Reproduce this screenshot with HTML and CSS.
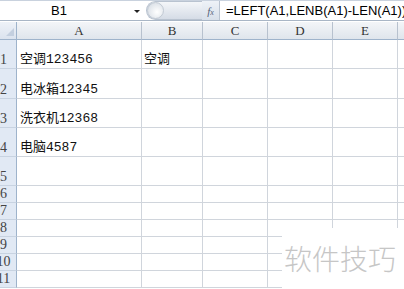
FILE: index.html
```html
<!DOCTYPE html>
<html lang="zh-CN">

<head>
    <meta charset="UTF-8">
    <meta name="viewport" content="width=device-width, initial-scale=1.0">
    <title>LEFT LENB</title>
    <link rel="stylesheet" href="styles.css">
</head>

<body>
    <!-- barra de fórmulas -->
    <div class="formula-bar">
        <div class="name-box">
            <span class="name">B1</span>
            <span class="arrow"></span>
        </div>
        <div class="grip"><span class="knob"></span></div>
        <div class="fx"><span>f</span><small>x</small></div>
        <div class="formula">=LEFT(A1,LENB(A1)-LEN(A1))</div>
    </div>

    <div class="sheet">
        <div class="row head">
            <div class="rh corner"><span class="tri"></span></div>
            <div class="ch a">A</div>
            <div class="ch b">B</div>
            <div class="ch c">C</div>
            <div class="ch d">D</div>
            <div class="ch e">E</div>
            <div class="ch f"></div>
        </div>
        <div class="row tall">
            <div class="rh">1</div>
            <div class="cell a">空调123456</div>
            <div class="cell b">空调</div>
            <div class="cell c"></div>
            <div class="cell d"></div>
            <div class="cell e"></div>
            <div class="cell f"></div>
        </div>
        <div class="row tall r2">
            <div class="rh">2</div>
            <div class="cell a">电冰箱12345</div>
            <div class="cell b"></div>
            <div class="cell c"></div>
            <div class="cell d"></div>
            <div class="cell e"></div>
            <div class="cell f"></div>
        </div>
        <div class="row tall">
            <div class="rh">3</div>
            <div class="cell a">洗衣机12368</div>
            <div class="cell b"></div>
            <div class="cell c"></div>
            <div class="cell d"></div>
            <div class="cell e"></div>
            <div class="cell f"></div>
        </div>
        <div class="row tall">
            <div class="rh">4</div>
            <div class="cell a">电脑4587</div>
            <div class="cell b"></div>
            <div class="cell c"></div>
            <div class="cell d"></div>
            <div class="cell e"></div>
            <div class="cell f"></div>
        </div>
        <div class="row tall">
            <div class="rh">5</div>
            <div class="cell a"></div>
            <div class="cell b"></div>
            <div class="cell c"></div>
            <div class="cell d"></div>
            <div class="cell e"></div>
            <div class="cell f"></div>
        </div>
        <div class="row">
            <div class="rh">6</div>
            <div class="cell a"></div>
            <div class="cell b"></div>
            <div class="cell c"></div>
            <div class="cell d"></div>
            <div class="cell e"></div>
            <div class="cell f"></div>
        </div>
        <div class="row">
            <div class="rh">7</div>
            <div class="cell a"></div>
            <div class="cell b"></div>
            <div class="cell c"></div>
            <div class="cell d"></div>
            <div class="cell e"></div>
            <div class="cell f"></div>
        </div>
        <div class="row">
            <div class="rh">8</div>
            <div class="cell a"></div>
            <div class="cell b"></div>
            <div class="cell c"></div>
            <div class="cell d"></div>
            <div class="cell e"></div>
            <div class="cell f"></div>
        </div>
        <div class="row">
            <div class="rh">9</div>
            <div class="cell a"></div>
            <div class="cell b"></div>
            <div class="cell c"></div>
            <div class="cell d"></div>
            <div class="cell e"></div>
            <div class="cell f"></div>
        </div>
        <div class="row">
            <div class="rh">10</div>
            <div class="cell a"></div>
            <div class="cell b"></div>
            <div class="cell c"></div>
            <div class="cell d"></div>
            <div class="cell e"></div>
            <div class="cell f"></div>
        </div>
        <div class="row">
            <div class="rh">11</div>
            <div class="cell a"></div>
            <div class="cell b"></div>
            <div class="cell c"></div>
            <div class="cell d"></div>
            <div class="cell e"></div>
            <div class="cell f"></div>
        </div>
    </div>

    <!-- marca d'água -->
    <div class="watermark">软件技巧</div>
</body>

</html>
```

FILE: styles.css
```css
* {
    margin: 0;
    padding: 0;
    box-sizing: border-box;
}

body {
    width: 404px;
    height: 289px;
    overflow: hidden;
    position: relative;
    background-color: #ffffff;
    font-family: "Liberation Sans", "Noto Sans CJK SC", sans-serif;
}

/* barra de fórmulas */
.formula-bar {
    display: flex;
    height: 21px;
    border-top: 1px solid #c9d2de;
    border-bottom: 1px solid #a9b6c6;
    background-color: #ffffff;
    margin-bottom: 1px;
}

.name-box {
    width: 146px;
    display: flex;
    align-items: center;
    padding-left: 51px;
}

.name {
    font-size: 13px;
    color: #000;
    width: 83px;
}

.arrow {
    width: 0;
    height: 0;
    border-left: 3px solid transparent;
    border-right: 3px solid transparent;
    border-top: 3px solid #222;
    margin-top: 1px;
}

.grip {
    width: 56px;
    height: 19px;
    border-radius: 10px 0 0 10px;
    background: linear-gradient(#f4f6f9, #d5dce6);
    border: 1px solid #b9c3d0;
    border-right: none;
    display: flex;
    align-items: center;
}

.knob {
    width: 17px;
    height: 17px;
    border-radius: 50%;
    background: radial-gradient(circle at 60% 60%, #ffffff, #dfe4ea 70%, #b8c0cb);
    border: 1px solid #c2cad4;
}

.fx {
    width: 18px;
    height: 19px;
    background: linear-gradient(#eef2f7, #d8e0ea);
    display: flex;
    align-items: center;
    justify-content: center;
    font-family: "Liberation Serif", serif;
    font-style: italic;
    font-size: 11px;
    color: #53627a;
    border-right: 1px solid #b9c3d0;
}

.fx small {
    font-size: 8px;
    margin-top: 3px;
}

.formula {
    flex: 1;
    padding-left: 6px;
    font-size: 13px;
    line-height: 19px;
    white-space: nowrap;
    overflow: hidden;
    color: #000;
}

/* grade */
.row {
    display: flex;
    height: 17px;
}

.row.head {
    height: 18px;
}

.row.tall {
    height: 29px;
}

.row.r2 {
    height: 30px;
}

.rh {
    width: 26px;
    margin-left: -9px;
    flex-shrink: 0;
    background-color: #e1e9f4;
    border-right: 1px solid #9eb3cb;
    border-bottom: 1px solid #c8d3e1;
    display: flex;
    align-items: flex-end;
    justify-content: center;
    font-family: "Liberation Serif", serif;
    font-size: 14px;
    line-height: 16px;
    color: #444;
}

.corner {
    background: linear-gradient(#eef2f8, #dbe3ee);
    border-bottom: 1px solid #9eb3cb;
    position: relative;
}

.tri {
    position: absolute;
    right: 2px;
    bottom: 3px;
    width: 0;
    height: 0;
    border-left: 8px solid transparent;
    border-bottom: 8px solid #c3cfdf;
}

.ch {
    flex-shrink: 0;
    background: linear-gradient(#f3f5f8, #dfe5ec);
    border-right: 1px solid #b7c1ce;
    border-bottom: 1px solid #9eb3cb;
    display: flex;
    align-items: center;
    justify-content: center;
    font-family: "Liberation Serif", serif;
    font-size: 13px;
    color: #333;
}

.cell {
    flex-shrink: 0;
    border-right: 1px solid #d0d5dc;
    border-bottom: 1px solid #d0d5dc;
    display: flex;
    align-items: flex-end;
    padding: 0 0 0 3px;
    font-family: "Liberation Mono", "Noto Sans CJK SC", monospace;
    font-size: 13px;
    line-height: 16px;
    color: #111;
    white-space: nowrap;
}

.a { width: 125px; }
.b { width: 61px; }
.c { width: 65px; }
.d { width: 65px; }
.e { width: 65px; }
.f { width: 40px; }

.cell.b {
    padding-left: 2px;
}

/* marca d'água por cima da grade */
.watermark {
    position: absolute;
    left: 282px;
    top: 228px;
    width: 122px;
    height: 61px;
    background-color: #ffffff;
    padding: 13px 0 0 2px;
    font-family: "Noto Sans CJK SC", sans-serif;
    font-weight: 300;
    font-size: 28px;
    line-height: 34px;
    color: #c6c6c6;
    white-space: nowrap;
}
```
